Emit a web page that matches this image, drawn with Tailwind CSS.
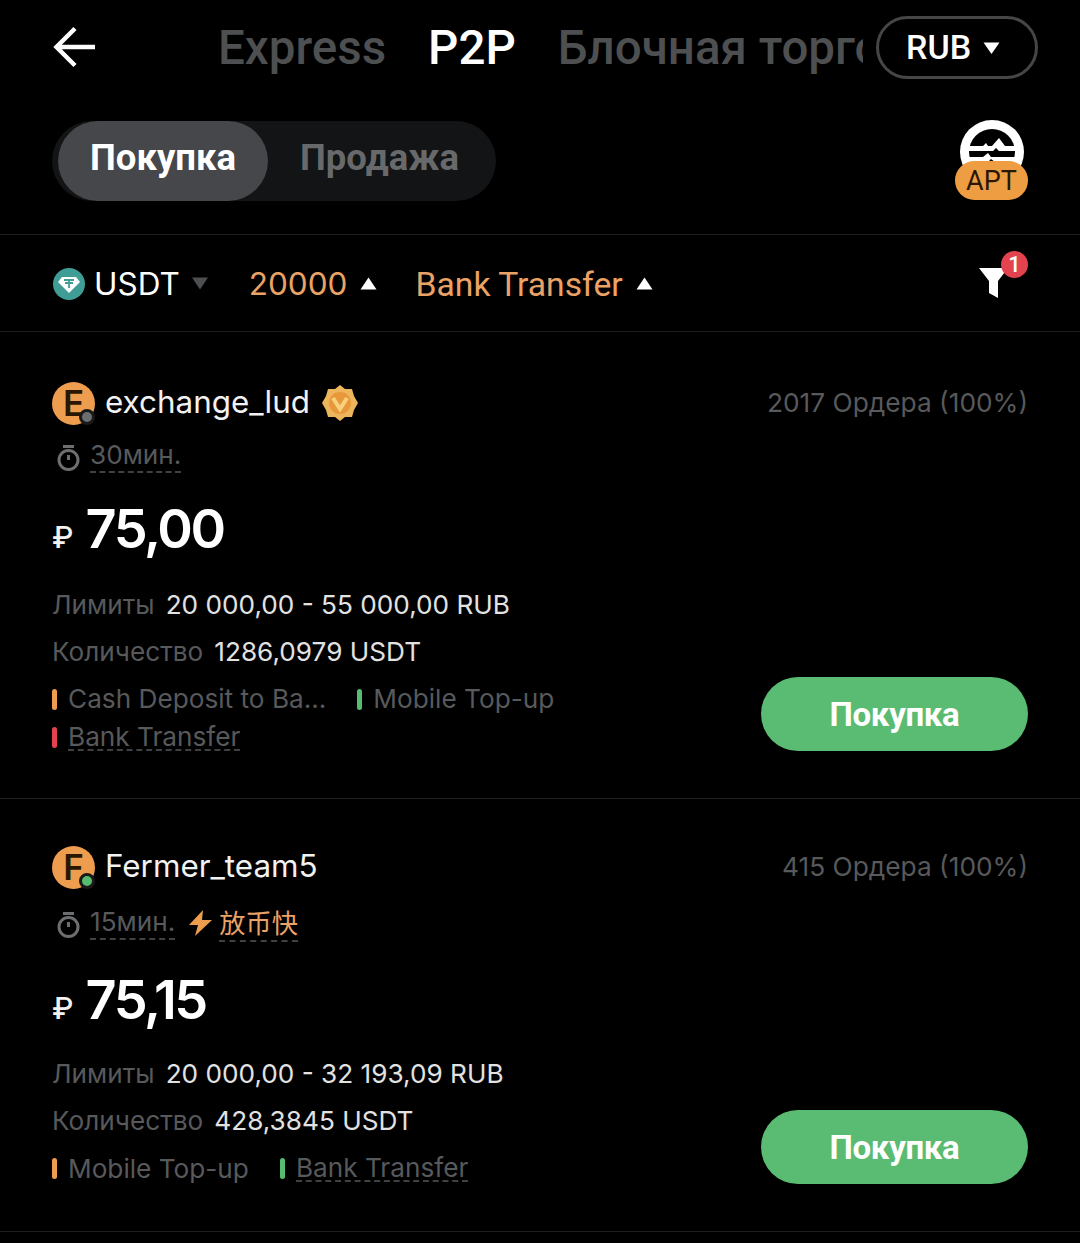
<!DOCTYPE html>
<html lang="en">
<head>
<meta charset="UTF-8">
<title>P2P</title>
<script src="https://cdn.jsdelivr.net/npm/@tailwindcss/browser@4"></script>
</head>
<body class="bg-black font-['Inter','Noto_Sans_CJK_SC',sans-serif] text-white w-[1080px] h-[1243px] overflow-hidden">

<!-- Top bar -->
<div class="flex items-center h-[96px] pl-[52px] pr-[42px]">
  <svg class="w-[44px] h-[44px] shrink-0 -mt-[2px]" viewBox="0 0 44 44" fill="none" stroke="white" stroke-width="4.5"><path d="M43 22H5M23 3.500L4.500 22L23 40.500"/></svg>
  <div class="flex items-center w-[645px] ml-[122px] pt-[2px] overflow-hidden whitespace-nowrap font-['Roboto','Noto_Sans',sans-serif] font-medium text-[47.500px] gap-[42px] h-[60px]">
    <span class="text-[#4d4f51]">Express</span>
    <span class="text-white">P2P</span>
    <span class="text-[#4d4f51]">Блочная торговля</span>
  </div>
  <div class="flex items-center gap-[12px] w-[162px] h-[63px] ml-[13px] pl-[27px] -mt-[1px] border-[3px] border-[#444648] rounded-full font-['Roboto',sans-serif] font-medium text-[34px]">
    <span>RUB</span>
    <svg class="w-[17px] h-[14px]" viewBox="0 0 17 14" fill="white"><path d="M0.500 1.500H16.500L8.500 13Z"/></svg>
  </div>
</div>

<!-- Buy / Sell -->
<div class="flex items-center justify-between h-[139px] pl-[52px] pr-[52px] border-b border-[#1c1d1e]">
  <div class="relative flex items-center w-[444px] h-[80px] rounded-full bg-[#131415] font-['Roboto',sans-serif] font-bold text-[36.500px] -mt-[8px]">
    <div class="flex items-center justify-center w-[210px] h-[80px] ml-[6px] pb-[6px] rounded-full bg-[#45474a] text-white">Покупка</div>
    <div class="ml-[32px] pb-[6px] text-[#67696b]">Продажа</div>
  </div>
  <div class="relative w-[74px] h-[80px] -mt-[10px]">
    <div class="absolute left-[6px] top-0 w-[64px] h-[64px] rounded-full bg-white flex items-center justify-center">
      <svg class="w-[46px] h-[46px]" viewBox="0 0 46 46"><circle cx="23" cy="23" r="23" fill="#000"/><path d="M0 17H14L17 14L19 17H23L30 9L36 17H46V22H30L27 19L24 22H0ZM0 28H14L19 24L22 28H46V33H26L22 30L19 33H0Z" fill="#fff"/></svg>
    </div>
    <div class="absolute left-[1px] top-[41px] w-[73px] h-[39px] pt-[2px] rounded-full bg-[#ee9d43] flex items-center justify-center text-[#2a1703] text-[27px] font-['Roboto',sans-serif]">APT</div>
  </div>
</div>

<!-- Filters -->
<div class="flex items-center h-[97px] pl-[53px] pr-[52px] pt-[1px] border-b border-[#1c1d1e] text-[31.500px]">
  <svg class="w-[32px] h-[32px]" viewBox="0 0 32 32"><circle cx="16" cy="16" r="16" fill="#3f9d96"/><path d="M9 9H23L27 14L16 25L5 14Z" fill="#fff"/><path d="M11 12H21M16 12V20M12 15H20" stroke="#3f9d96" stroke-width="1.800"/></svg>
  <span class="ml-[9px]">USDT</span>
  <svg class="ml-[11px] w-[18px] h-[13px]" viewBox="0 0 17 13" fill="#4d4f51"><path d="M0.500 0.500H16.500L8.500 12.500Z"/></svg>
  <span class="ml-[40px] text-[#eba265]">20000</span>
  <svg class="ml-[13px] w-[17px] h-[13px]" viewBox="0 0 17 13" fill="white"><path d="M0.500 12.500H16.500L8.500 0.500Z"/></svg>
  <span class="ml-[38px] mt-[4px] text-[#eba265] font-['Roboto',sans-serif] text-[33.700px]">Bank Transfer</span>
  <svg class="ml-[13px] w-[17px] h-[13px]" viewBox="0 0 17 13" fill="white"><path d="M0.500 12.500H16.500L8.500 0.500Z"/></svg>
  <div class="relative ml-auto w-[49px] h-[48px] -mt-[11px]">
    <svg class="absolute left-0 top-[13px] w-[29px] h-[31px]" viewBox="0 0 29 31" fill="white"><path d="M0 1H29L19 14V31L10 26V14Z"/></svg>
    <div class="absolute right-0 top-[-3px] w-[27px] h-[27px] rounded-full bg-[#e2434f] flex items-center justify-center text-[22px] leading-none font-medium font-['Roboto',sans-serif]">1</div>
  </div>
</div>

<!-- Offer 1 -->
<div class="relative h-[467px] pl-[52px] pr-[52px] pt-[50px] border-b border-[#1c1d1e]">
  <div class="flex items-center h-[42px]">
    <div class="relative w-[43px] h-[43px] rounded-full bg-[#ee9d4f] flex items-center justify-center text-[#2a1703] text-[35px] font-semibold">E
      <span class="absolute right-0 bottom-0 w-[16px] h-[16px] rounded-full bg-[#6c6e70] border-[3px] border-[#1a1a1a]"></span>
    </div>
    <span class="ml-[10px] text-[31.400px] text-[#f2f2f2]">exchange_lud</span>
    <svg class="ml-[12px] w-[36px] h-[36px]" viewBox="0 0 36 36"><path d="M18 0L23 4L30 4L32 11L36 18L32 25L30 32L23 32L18 36L13 32L6 32L4 25L0 18L4 11L6 4L13 4Z" fill="#eeb65c"/><circle cx="18" cy="18" r="11" fill="#e8973a"/><path d="M11 13L18 24L25 13" fill="none" stroke="#f7d27d" stroke-width="4"/></svg>
    <span class="ml-auto text-[26.300px] text-[#57595b]">2017 Ордера (100%)</span>
  </div>
  <div class="flex items-center h-[44px] mt-[10px] text-[26.200px] text-[#57595b]">
    <svg class="ml-[5px] w-[23px] h-[26px] mt-[4px]" viewBox="0 0 23 26" fill="none" stroke="#6c6e70" stroke-width="3"><circle cx="11.500" cy="15" r="9.500"/><path d="M6 1.500H17M11.500 10V15"/></svg>
    <span class="ml-[10px] border-b-2 border-dashed border-[#3f4143] leading-[32px]">30мин.</span>
  </div>
  <div class="flex items-baseline h-[66px] mt-[10px]">
    <span class="text-[30px] font-medium text-[#f2f2f2]">₽</span>
    <span class="ml-[12px] text-[54px] font-semibold tracking-[-2.400px]">75,00</span>
  </div>
  <div class="flex items-center h-[47px] mt-[27px] text-[26.200px]">
    <span class="text-[#57595b]">Лимиты</span><span class="ml-[11px] text-[#e2e2e2]">20 000,00 - 55 000,00 RUB</span>
  </div>
  <div class="flex items-center h-[47px] text-[26.200px]">
    <span class="text-[#57595b]">Количество</span><span class="ml-[11px] text-[#e2e2e2]">1286,0979 USDT</span>
  </div>
  <div class="flex items-center h-[48px] text-[26.200px] text-[#57595b]">
    <span class="w-[5px] h-[21px] rounded-full bg-[#ee9d4f]"></span><span class="ml-[11px]">Cash Deposit to Ba...</span>
    <span class="ml-[31px] w-[5px] h-[21px] rounded-full bg-[#56bc70]"></span><span class="ml-[11px]">Mobile Top-up</span>
  </div>
  <div class="flex items-center h-[28px] text-[26.200px] text-[#57595b]">
    <span class="w-[5px] h-[21px] rounded-full bg-[#e2434f]"></span><span class="ml-[11px] border-b-2 border-dashed border-[#3f4143] leading-[25px]">Bank Transfer</span>
  </div>
  <button class="absolute right-[52px] top-[345px] w-[267px] h-[74px] pt-[2px] rounded-full bg-[#5abb72] text-[33px] tracking-[-0.3px] font-bold font-['Roboto',sans-serif] text-white">Покупка</button>
</div>

<!-- Offer 2 -->
<div class="relative h-[433px] pl-[52px] pr-[52px] pt-[47px] border-b border-[#1c1d1e]">
  <div class="flex items-center h-[42px]">
    <div class="relative w-[43px] h-[43px] rounded-full bg-[#ee9d4f] flex items-center justify-center text-[#2a1703] text-[35px] font-semibold">F
      <span class="absolute right-0 bottom-0 w-[16px] h-[16px] rounded-full bg-[#56bc70] border-[3px] border-[#1a1a1a]"></span>
    </div>
    <span class="ml-[10px] text-[31.400px] text-[#f2f2f2]">Fermer_team5</span>
    <span class="ml-auto text-[26.300px] text-[#57595b]">415 Ордера (100%)</span>
  </div>
  <div class="flex items-center h-[44px] mt-[13px] text-[26.200px] text-[#57595b]">
    <svg class="ml-[5px] w-[23px] h-[26px] mt-[4px]" viewBox="0 0 23 26" fill="none" stroke="#6c6e70" stroke-width="3"><circle cx="11.500" cy="15" r="9.500"/><path d="M6 1.500H17M11.500 10V15"/></svg>
    <span class="ml-[10px] border-b-2 border-dashed border-[#3f4143] leading-[32px]">15мин.</span>
    <svg class="ml-[14px] w-[23px] h-[26px]" viewBox="0 0 23 26" fill="#ee9d4f"><path d="M14 0L0 15H9L6 26L23 10H13Z"/></svg>
    <span class="ml-[7px] text-[#eba265] border-b-2 border-dashed border-[#3f4143] leading-[32px] mt-[4px]">放币快</span>
  </div>
  <div class="flex items-baseline h-[66px] mt-[14px]">
    <span class="text-[30px] font-medium text-[#f2f2f2]">₽</span>
    <span class="ml-[12px] text-[54px] font-semibold tracking-[-2.400px]">75,15</span>
  </div>
  <div class="flex items-center h-[47px] mt-[25px] text-[26.200px]">
    <span class="text-[#57595b]">Лимиты</span><span class="ml-[11px] text-[#e2e2e2]">20 000,00 - 32 193,09 RUB</span>
  </div>
  <div class="flex items-center h-[47px] text-[26.200px]">
    <span class="text-[#57595b]">Количество</span><span class="ml-[11px] text-[#e2e2e2]">428,3845 USDT</span>
  </div>
  <div class="flex items-center h-[49px] text-[26.200px] text-[#57595b]">
    <span class="w-[5px] h-[21px] rounded-full bg-[#ee9d4f]"></span><span class="ml-[11px]">Mobile Top-up</span>
    <span class="ml-[31px] w-[5px] h-[21px] rounded-full bg-[#56bc70]"></span><span class="ml-[11px] border-b-2 border-dashed border-[#3f4143] leading-[25px]">Bank Transfer</span>
  </div>
  <button class="absolute right-[52px] top-[311px] w-[267px] h-[74px] pt-[2px] rounded-full bg-[#5abb72] text-[33px] tracking-[-0.3px] font-bold font-['Roboto',sans-serif] text-white">Покупка</button>
</div>

</body>
</html>
